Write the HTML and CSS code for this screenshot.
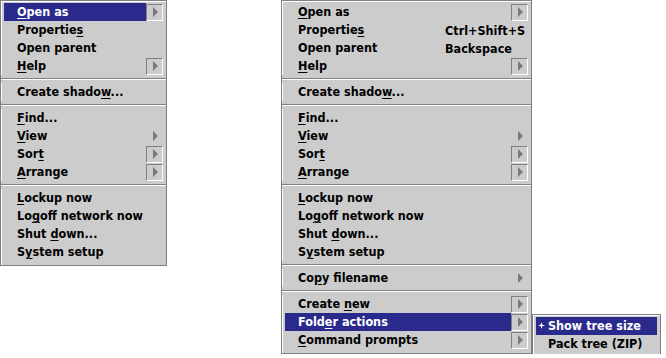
FILE: index.html
```
<!DOCTYPE html>
<html lang="en">
<head>
    <meta charset="UTF-8">
    <title>Folder menus</title>
    <link rel="stylesheet" href="styles.css">
</head>
<body>
    <div class="desktop">
        <!-- short folder menu -->
        <div class="menu menu-short">
            <div class="row active"><span class="label"><u>O</u>pen as</span><span class="cascade box"><i class="arrow"></i></span></div>
            <div class="row"><span class="label">Propertie<u>s</u></span></div>
            <div class="row"><span class="label">Open parent</span></div>
            <div class="row"><span class="label"><u>H</u>elp</span><span class="cascade box"><i class="arrow"></i></span></div>
            <div class="sep"></div>
            <div class="row"><span class="label">Create shado<u>w</u>...</span></div>
            <div class="sep"></div>
            <div class="row"><span class="label"><u>F</u>ind...</span></div>
            <div class="row"><span class="label"><u>V</u>iew</span><span class="cascade"><i class="arrow"></i></span></div>
            <div class="row"><span class="label">Sor<u>t</u></span><span class="cascade box"><i class="arrow"></i></span></div>
            <div class="row"><span class="label"><u>A</u>rrange</span><span class="cascade box"><i class="arrow"></i></span></div>
            <div class="sep"></div>
            <div class="row"><span class="label"><u>L</u>ockup now</span></div>
            <div class="row"><span class="label">Lo<u>g</u>off network now</span></div>
            <div class="row"><span class="label">Shut <u>d</u>own...</span></div>
            <div class="row"><span class="label">S<u>y</u>stem setup</span></div>
        </div>

        <!-- full folder menu -->
        <div class="menu menu-long">
            <div class="row"><span class="label"><u>O</u>pen as</span><span class="cascade box"><i class="arrow"></i></span></div>
            <div class="row"><span class="label">Propertie<u>s</u></span><span class="key">Ctrl+Shift+S</span></div>
            <div class="row"><span class="label">Open parent</span><span class="key">Backspace</span></div>
            <div class="row"><span class="label"><u>H</u>elp</span><span class="cascade box"><i class="arrow"></i></span></div>
            <div class="sep"></div>
            <div class="row"><span class="label">Create shado<u>w</u>...</span></div>
            <div class="sep"></div>
            <div class="row"><span class="label"><u>F</u>ind...</span></div>
            <div class="row"><span class="label"><u>V</u>iew</span><span class="cascade"><i class="arrow"></i></span></div>
            <div class="row"><span class="label">Sor<u>t</u></span><span class="cascade box"><i class="arrow"></i></span></div>
            <div class="row"><span class="label"><u>A</u>rrange</span><span class="cascade box"><i class="arrow"></i></span></div>
            <div class="sep"></div>
            <div class="row"><span class="label"><u>L</u>ockup now</span></div>
            <div class="row"><span class="label">Lo<u>g</u>off network now</span></div>
            <div class="row"><span class="label">Shut <u>d</u>own...</span></div>
            <div class="row"><span class="label">S<u>y</u>stem setup</span></div>
            <div class="sep"></div>
            <div class="row"><span class="label">Co<u>p</u>y filename</span><span class="cascade"><i class="arrow"></i></span></div>
            <div class="sep"></div>
            <div class="row"><span class="label">Create <u>n</u>ew</span><span class="cascade box"><i class="arrow"></i></span></div>
            <div class="row active open">
                <span class="label">Fold<u>e</u>r actions</span><span class="cascade box"><i class="arrow"></i></span>
                <div class="menu submenu">
                    <div class="row active"><span class="label"><svg class="check" width="7" height="7" viewBox="0 0 7 7"><path d="M3.5 0 L4.3 2.7 L7 3.5 L4.3 4.3 L3.5 7 L2.7 4.3 L0 3.5 L2.7 2.7 Z" fill="#fff"/></svg>Show tree size</span></div>
                    <div class="row"><span class="label">Pack tree (ZIP)</span></div>
                </div>
            </div>
            <div class="row"><span class="label"><u>C</u>ommand prompts</span><span class="cascade box"><i class="arrow"></i></span></div>
        </div>
    </div>
</body>
</html>
```

FILE: styles.css
```
body {
    margin: 0;
    background: #fff;
    font-family: "DejaVu Sans Condensed", "DejaVu Sans", sans-serif;
    font-weight: bold;
    font-size: 12.5px;
    color: #000;
}
.desktop {
    display: flex;
    align-items: flex-start;
    gap: 114px;
}
.menu {
    background: #cccccc;
    border: 1px solid #808080;
    box-shadow: inset 1px 1px 0 #fff;
    padding: 2px 3px 4px 3px;
}
.menu-short {
    width: 159px;
}
.menu-long {
    width: 243px;
}
.row {
    display: flex;
    align-items: center;
    height: 18px;
    position: relative;
}
.label {
    flex: 1;
    display: block;
    height: 18px;
    line-height: 17px;
    padding-left: 13px;
    white-space: nowrap;
}
.row.active > .label {
    background: #2a2a8c;
    color: #fff;
}
u {
    text-decoration-thickness: 1px;
    text-underline-offset: 2px;
}
.key {
    width: 83px;
    flex: none;
    line-height: 17px;
}
.cascade {
    width: 17px;
    height: 17px;
    box-sizing: border-box;
    display: flex;
    align-items: center;
    justify-content: center;
    flex: none;
}
.cascade.box {
    border-top: 1px solid #808080;
    border-left: 1px solid #808080;
    border-right: 1px solid #fff;
    border-bottom: 1px solid #fff;
}
.arrow {
    width: 0;
    height: 0;
    border-left: 5px solid #7a7a7a;
    border-top: 5px solid transparent;
    border-bottom: 5px solid transparent;
    margin-left: 1px;
}
.sep {
    height: 8px;
    margin: 0 -3px;
    background: linear-gradient(#cccccc 3px, #808080 3px, #808080 4px, #fff 4px, #fff 5px, #cccccc 5px);
}
.submenu {
    position: absolute;
    left: 247px;
    top: 1px;
    width: 121px;
    padding: 2px 3px 3px 3px;
}
.submenu .label {
    padding-left: 12px;
    position: relative;
}
.check {
    position: absolute;
    left: 2px;
    top: 5px;
}
```
